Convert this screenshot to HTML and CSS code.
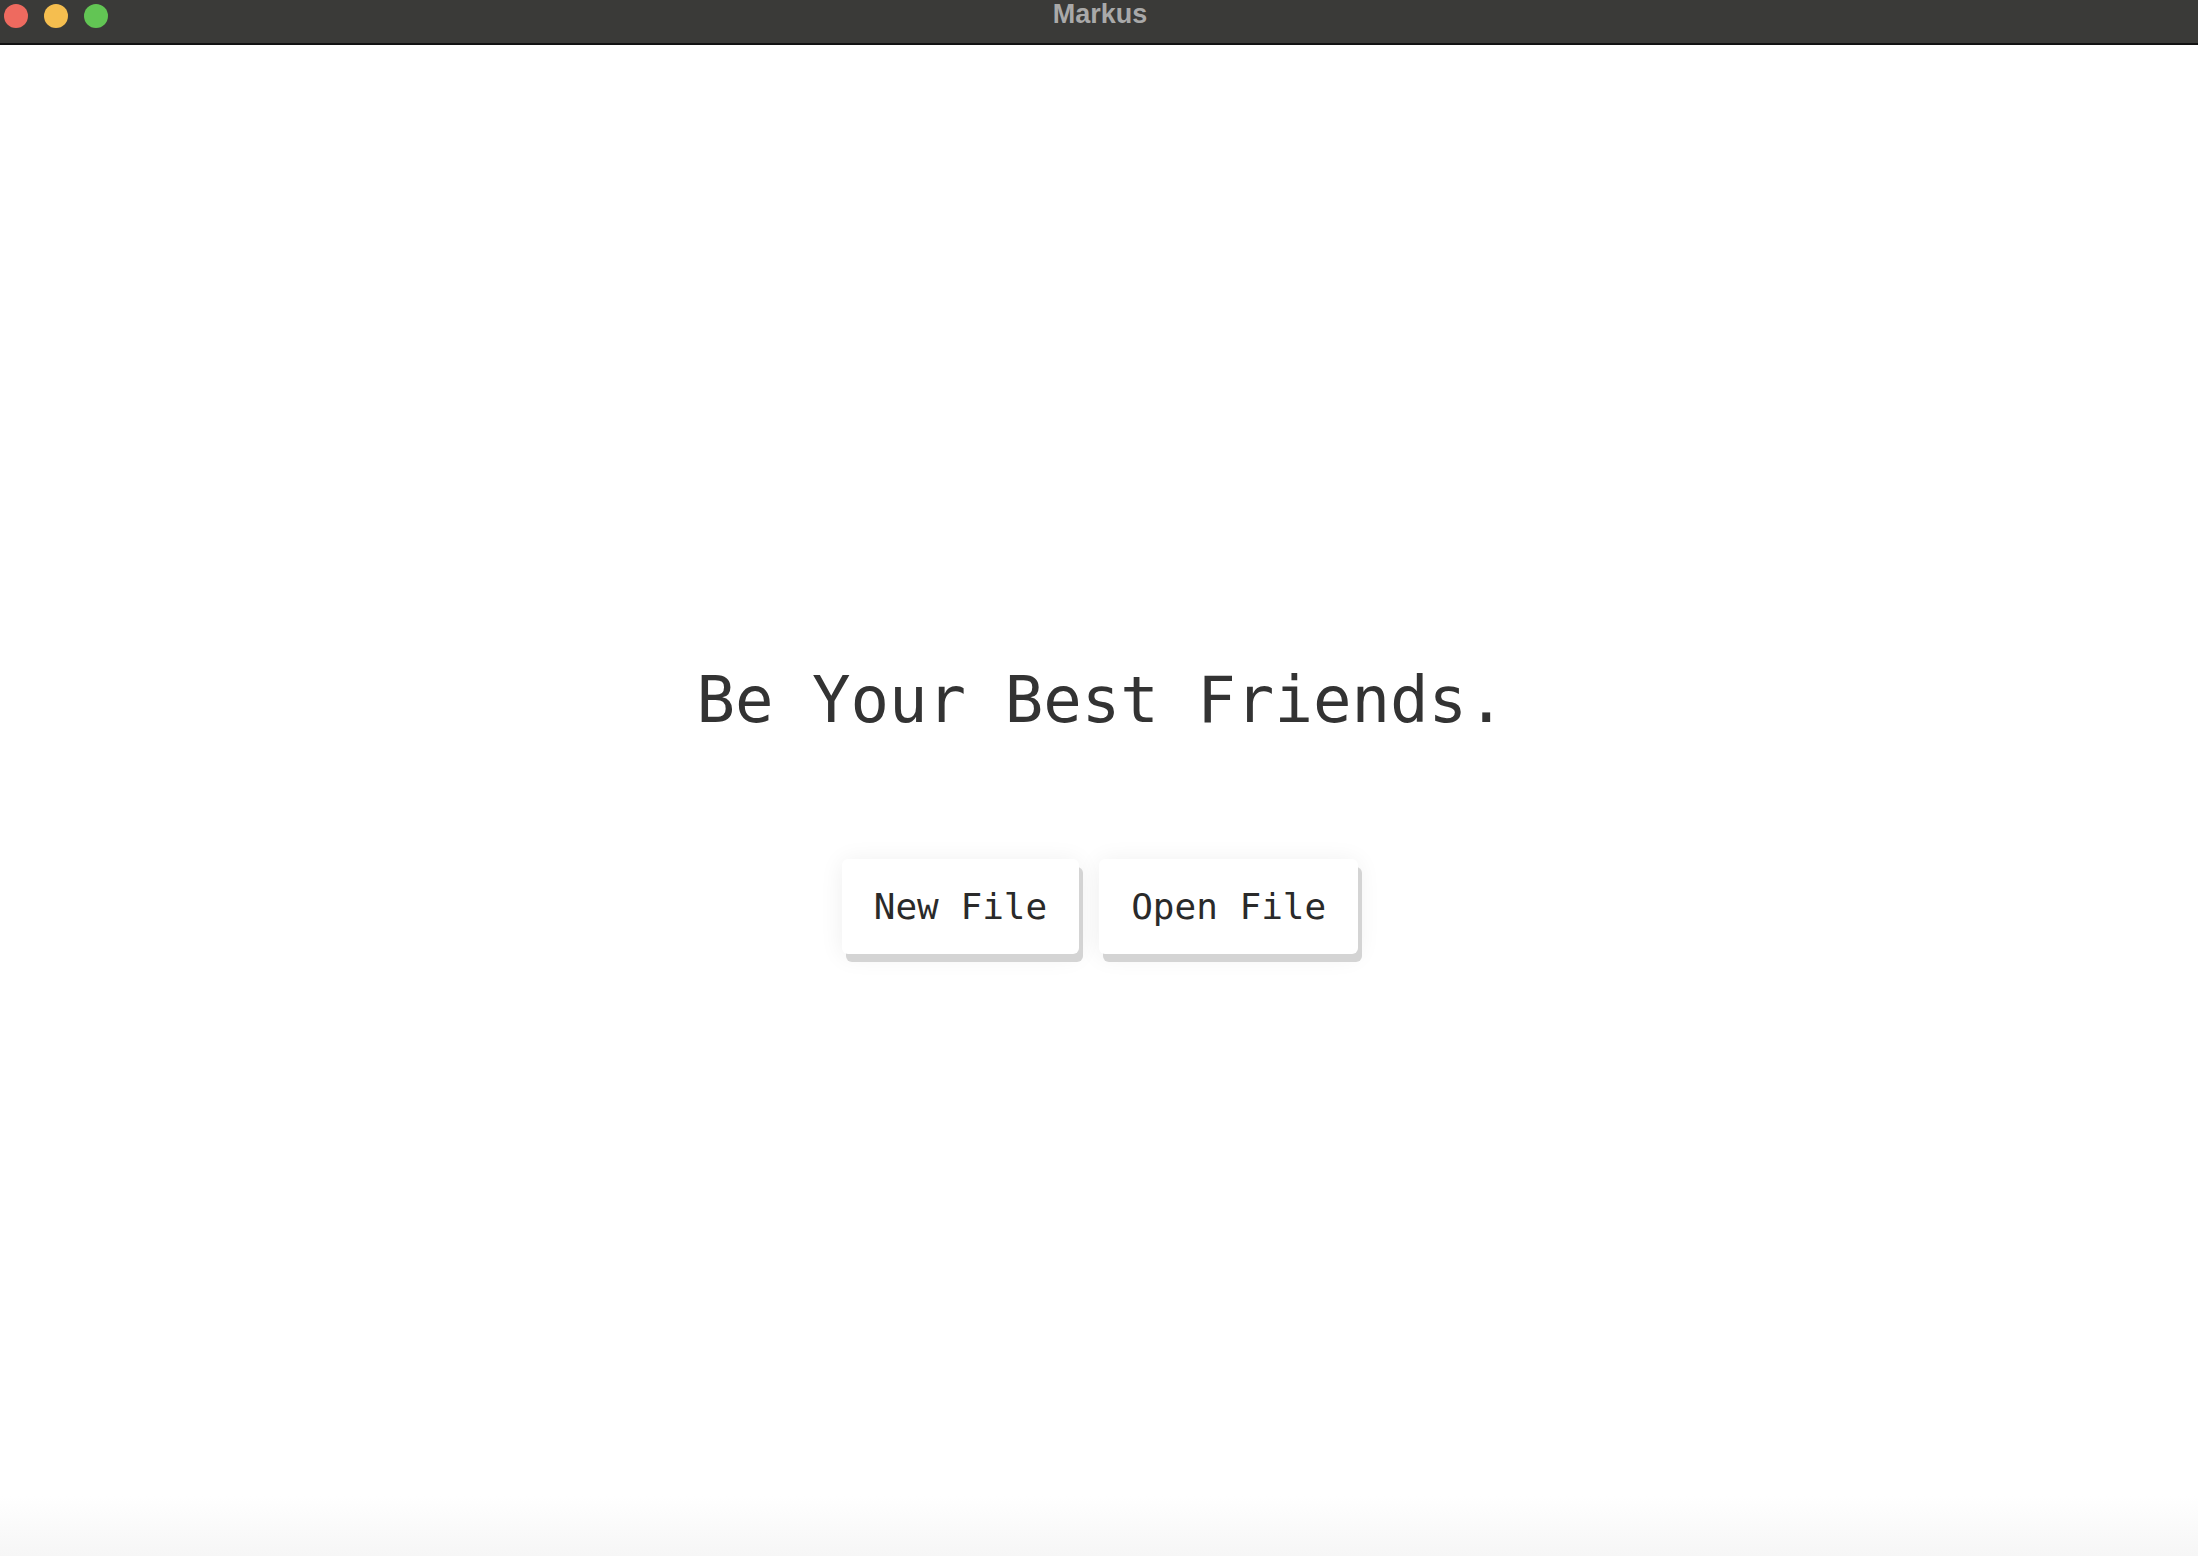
FILE: index.html
```html
<!DOCTYPE html>
<html lang="en">
<head>
<meta charset="utf-8">
<title>Markus</title>
<link rel="stylesheet" href="styles.css">
</head>
<body>
<div class="window">
  <header class="titlebar">
    <div class="lights">
      <span class="light red"></span>
      <span class="light yellow"></span>
      <span class="light green"></span>
    </div>
    <div class="title">Markus</div>
  </header>
  <main class="content">
    <h1 class="headline">Be Your Best Friends.</h1>
    <div class="actions">
      <button class="btn">New File</button>
      <button class="btn">Open File</button>
    </div>
  </main>
</div>
</body>
</html>
```

FILE: styles.css
```css
* { box-sizing: border-box; }
html, body { margin: 0; padding: 0; }
body {
  width: 2198px;
  height: 1556px;
  overflow: hidden;
  background: #ffffff;
}
.window {
  display: flex;
  flex-direction: column;
  height: 1556px;
}
.titlebar {
  position: relative;
  height: 45px;
  flex: 0 0 45px;
  background: #3a3a38;
  border-bottom: 2px solid #121212;
  display: flex;
  justify-content: center;
  align-items: flex-start;
}
.lights {
  position: absolute;
  left: 4px;
  top: 4px;
  display: flex;
  gap: 16px;
}
.light {
  width: 24px;
  height: 24px;
  border-radius: 50%;
  display: block;
}
.red { background: #ee6a5f; }
.yellow { background: #f5be4f; }
.green { background: #62c554; }
.title {
  font-family: "Liberation Sans", Arial, sans-serif;
  font-weight: 700;
  font-size: 27px;
  line-height: 29px;
  color: #a9a9a9;
  margin-left: 2px;
}
.content {
  flex: 1;
  display: flex;
  flex-direction: column;
  align-items: center;
  justify-content: center;
  padding-top: 21px;
  background: linear-gradient(to bottom, #ffffff 0, #ffffff calc(100% - 60px), #f6f6f6 100%);
}
.headline {
  margin: 0;
  font-family: "DejaVu Sans Mono", Menlo, monospace;
  font-weight: 400;
  font-size: 64px;
  line-height: 64px;
  color: #333333;
  margin-left: 4px;
}
.actions {
  display: flex;
  gap: 20px;
  margin-top: 127px;
  margin-left: 2px;
}
.btn {
  font-family: "DejaVu Sans Mono", Menlo, monospace;
  font-size: 36px;
  line-height: 95px;
  height: 95px;
  padding: 0 32px;
  border: none;
  border-radius: 6px;
  background: #ffffff;
  color: #2a2a2a;
  box-shadow: 4px 8px 0 #d4d4d4, 0 2px 24px rgba(0, 0, 0, 0.07);
  cursor: pointer;
}
```
